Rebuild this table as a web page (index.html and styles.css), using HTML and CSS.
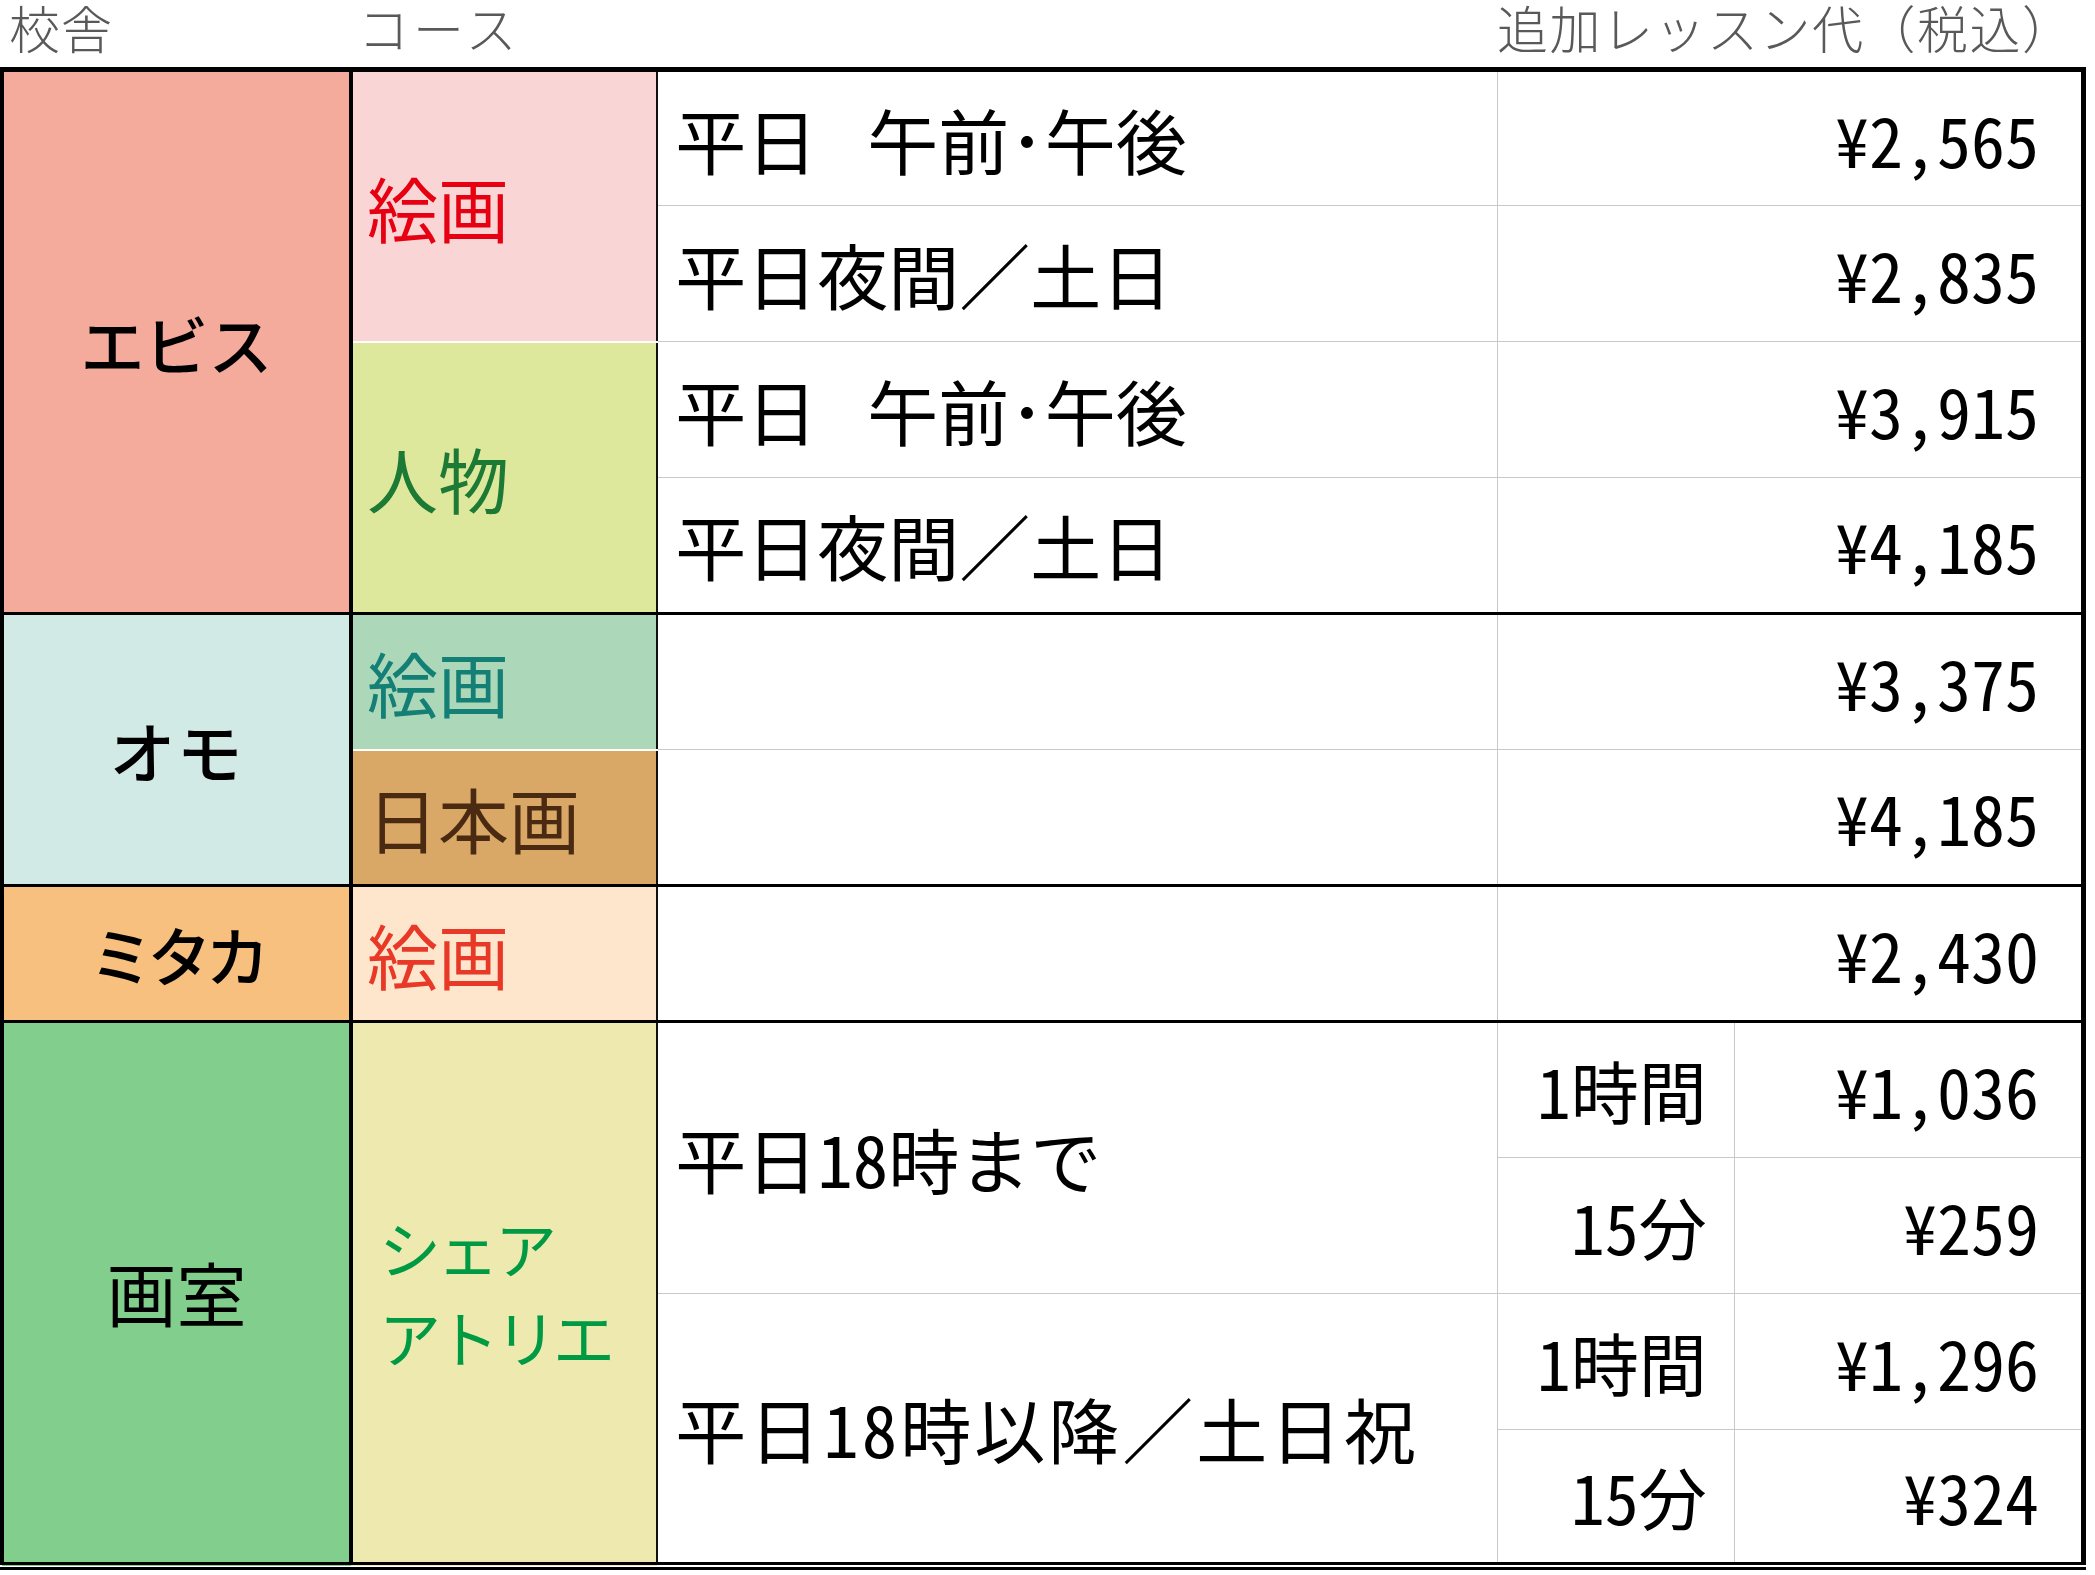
FILE: index.html
```html
<!DOCTYPE html>
<html lang="ja">
<head>
  <meta charset="UTF-8" />
  <meta name="viewport" content="width=device-width, initial-scale=1.0"/>
  <title>追加レッスン代</title>
  <link rel="stylesheet" href="styles.css">
</head>
<body>

  <div class="sheet">
    <!-- Column labels above the table -->
    <div class="sheet-head">
      <span class="head-school">校舎</span>
      <span class="head-course">コース</span>
      <span class="head-price">追加レッスン代（税込）</span>
    </div>

    <table class="price-table">
      <colgroup>
        <col class="c-school">
        <col class="c-course">
        <col class="c-desc">
        <col class="c-time">
        <col class="c-price">
      </colgroup>
      <tbody>
        <!-- エビス -->
        <tr>
          <td class="school ebisu" rowspan="4">エビス</td>
          <td class="course ebisu-paint" rowspan="2">絵画</td>
          <td class="desc">平日<span class="gap"></span>午前･午後</td>
          <td class="price" colspan="2">¥2,565</td>
        </tr>
        <tr>
          <td class="desc">平日夜間／土日</td>
          <td class="price" colspan="2">¥2,835</td>
        </tr>
        <tr>
          <td class="course ebisu-figure end" rowspan="2">人物</td>
          <td class="desc">平日<span class="gap"></span>午前･午後</td>
          <td class="price" colspan="2">¥3,915</td>
        </tr>
        <tr class="group-end">
          <td class="desc">平日夜間／土日</td>
          <td class="price" colspan="2">¥4,185</td>
        </tr>

        <!-- オモ -->
        <tr>
          <td class="school omo" rowspan="2">オモ</td>
          <td class="course omo-paint">絵画</td>
          <td class="desc"></td>
          <td class="price" colspan="2">¥3,375</td>
        </tr>
        <tr class="group-end">
          <td class="course omo-nihonga end">日本画</td>
          <td class="desc"></td>
          <td class="price" colspan="2">¥4,185</td>
        </tr>

        <!-- ミタカ -->
        <tr class="group-end">
          <td class="school mitaka">ミタカ</td>
          <td class="course mitaka-paint end">絵画</td>
          <td class="desc"></td>
          <td class="price" colspan="2">¥2,430</td>
        </tr>

        <!-- 画室 -->
        <tr>
          <td class="school atelier" rowspan="4">画室</td>
          <td class="course share" rowspan="4">シェア<br>アトリエ</td>
          <td class="desc" rowspan="2">平日<span class="num">18</span>時まで</td>
          <td class="time"><span class="num">1</span>時間</td>
          <td class="price">¥1,036</td>
        </tr>
        <tr>
          <td class="time"><span class="num">15</span>分</td>
          <td class="price">¥259</td>
        </tr>
        <tr>
          <td class="desc desc-wide" rowspan="2">平日<span class="num">18</span>時以降／土日祝</td>
          <td class="time"><span class="num">1</span>時間</td>
          <td class="price">¥1,296</td>
        </tr>
        <tr>
          <td class="time"><span class="num">15</span>分</td>
          <td class="price">¥324</td>
        </tr>
      </tbody>
    </table>
  </div>

</body>
</html>
```

FILE: styles.css
```css
/* Reset & Font */
* {
  box-sizing: border-box;
  margin: 0;
  padding: 0;
}

body {
  font-family: "Noto Sans CJK JP", "Noto Sans", sans-serif;
  background: #fff;
  color: #000;
}

.sheet {
  width: 2088px;
}

/* Header labels */
.sheet-head {
  display: grid;
  grid-template-columns: 352px 305px 840px 1fr;
  height: 67px;
  padding-top: 3px;
  font-family: "Liberation Sans", "Noto Sans CJK JP", sans-serif;
  font-size: 51px;
  font-weight: 300;
  line-height: 57px;
  letter-spacing: 1px;
  color: #595959;
}

.head-school {
  padding-left: 9px;
}

.head-course {
  padding-left: 6px;
  letter-spacing: 4px;
}

.head-price {
  grid-column: 4;
  letter-spacing: 1.5px;
}

/* Table */
.price-table {
  border-collapse: collapse;
  table-layout: fixed;
  width: 2086px;
  border-top: 5px solid #000;
  border-left: 4px solid #000;
  border-right: 5px solid #000;
  border-bottom: 8px double #000;
}

.c-school { width: 349px; }
.c-course { width: 306px; }
.c-desc { width: 840px; }
.c-time { width: 237px; }
.c-price { width: 349px; }

.price-table td {
  height: 136px;
  padding: 0;
  vertical-align: middle;
  font-size: 68px;
  line-height: 1.2;
  white-space: nowrap;
}

.num,
.price {
  font-feature-settings: "hwid";
}

/* School column */
.school {
  text-align: center;
  border-right: 4px solid #000;
  border-bottom: 3px solid #000;
  font-weight: 500;
}

.price-table .ebisu { background: #f4ab9c; font-size: 64px; }
.price-table .omo { background: #d2eae5; font-size: 66px; letter-spacing: 1px; }
.price-table .mitaka { background: #f8c07f; font-size: 64px; letter-spacing: -6px; }
.price-table .atelier { background: #82cf8d; font-size: 70px; font-weight: 400; }

/* Course column */
.price-table .course {
  padding-left: 14px;
  font-size: 71px;
  border-right: 2px solid #111;
  border-bottom: 2px solid #fff;
}

.price-table .course.end {
  border-bottom: 3px solid #000;
}

.ebisu-paint { background: #f9d5d5; color: #e60012; }
.ebisu-figure { background: #dde89d; color: #1d7a34; }
.omo-paint { background: #acd8b9; color: #137f75; }
.omo-nihonga { background: #d9a866; color: #4b2a12; }
.mitaka-paint { background: #fee6cd; color: #e83828; }

.price-table .share {
  background: #ede9af;
  color: #009a44;
  padding-left: 26px;
  font-size: 62px;
  line-height: 89px;
  letter-spacing: -4px;
}

/* Description, time & price cells */
.price-table .desc {
  padding-left: 17px;
  font-size: 71px;
  border-bottom: 1px solid #c8c8c8;
}

.price-table .desc-wide {
  letter-spacing: 3px;
}

.gap {
  display: inline-block;
  width: 50px;
}

.time,
.price {
  text-align: right;
  border-left: 1px solid #c8c8c8;
  border-bottom: 1px solid #c8c8c8;
}

.price-table .time {
  padding-right: 27px;
}

.price-table .price {
  padding-right: 42px;
}

/* Black rule under each school group */
.price-table tr.group-end td {
  border-bottom: 3px solid #000;
}
```
